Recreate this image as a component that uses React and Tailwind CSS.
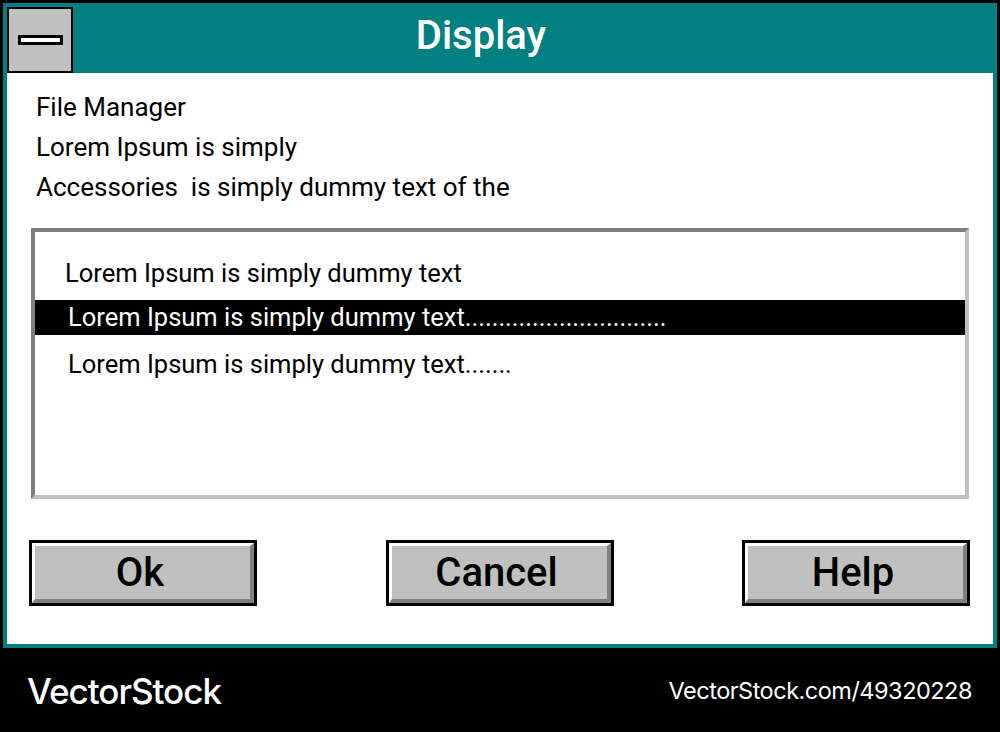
const roboto = { fontFamily: 'Roboto, "Noto Sans", sans-serif' }

function BevelButton({ label }) {
  return (
    <button
      type="button"
      className="h-[66px] w-[228px] border-[3px] border-black bg-[#c0c0c0] p-0"
    >
      <div className="flex h-full w-full items-center justify-center border-t-[3px] border-l-[3px] border-b-[4px] border-r-[4px] border-t-white border-l-white border-b-[#808080] border-r-[#808080] pr-[5px] pt-[1px] text-[40px] font-medium text-black">
        {label}
      </div>
    </button>
  )
}

export default function App() {
  return (
    <div className="flex h-[732px] w-[1000px] flex-col bg-black" style={roboto}>
      <div className="mx-[3px] mt-[3px] flex h-[645px] flex-col border-4 border-[#008080] bg-white">
        <div className="flex h-[66px] items-stretch bg-[#008080]">
          <div className="flex h-[66px] w-[66px] items-center justify-center border-2 border-black bg-[#c0c0c0]">
            <div className="h-[10px] w-[45px] border-[3px] border-black bg-white" />
          </div>
          <div className="flex flex-1 items-center justify-center pr-[104px] pb-[8px] text-[40px] font-medium text-white">
            Display
          </div>
        </div>

        <div className="flex flex-col pt-[14px] pl-[29px] text-[26px] leading-[40px] text-black">
          <span>File Manager</span>
          <span>Lorem Ipsum is simply</span>
          <span className="whitespace-pre">Accessories  is simply dummy text of the</span>
        </div>

        <div className="mx-[24px] mt-[21px] h-[271px] border-[4px] border-t-[#808080] border-l-[#808080] border-b-[#c0c0c0] border-r-[#c0c0c0] bg-white pt-[24px] text-[25.5px] text-black">
          <div className="pl-[30px] leading-[34px]">Lorem Ipsum is simply dummy text</div>
          <div className="mt-[10px] h-[35px] bg-black pl-[33px] leading-[35px] text-white">
            Lorem Ipsum is simply dummy text..............................
          </div>
          <div className="mt-[11px] pl-[33px] leading-[36px]">Lorem Ipsum is simply dummy text.......</div>
        </div>

        <div className="mt-[41px] flex justify-between pl-[22px] pr-[23px]">
          <BevelButton label="Ok" />
          <BevelButton label="Cancel" />
          <BevelButton label="Help" />
        </div>
      </div>

      <div
        className="flex flex-1 items-center justify-between pt-[2px] pl-[27px] pr-[28px] text-white"
        style={{ fontFamily: 'Inter, "Liberation Sans", sans-serif' }}
      >
        <span className="text-[35px] font-medium tracking-[-1px]">VectorStock</span>
        <span className="text-[23.5px] tracking-[-0.5px]">VectorStock.com/49320228</span>
      </div>
    </div>
  )
}
